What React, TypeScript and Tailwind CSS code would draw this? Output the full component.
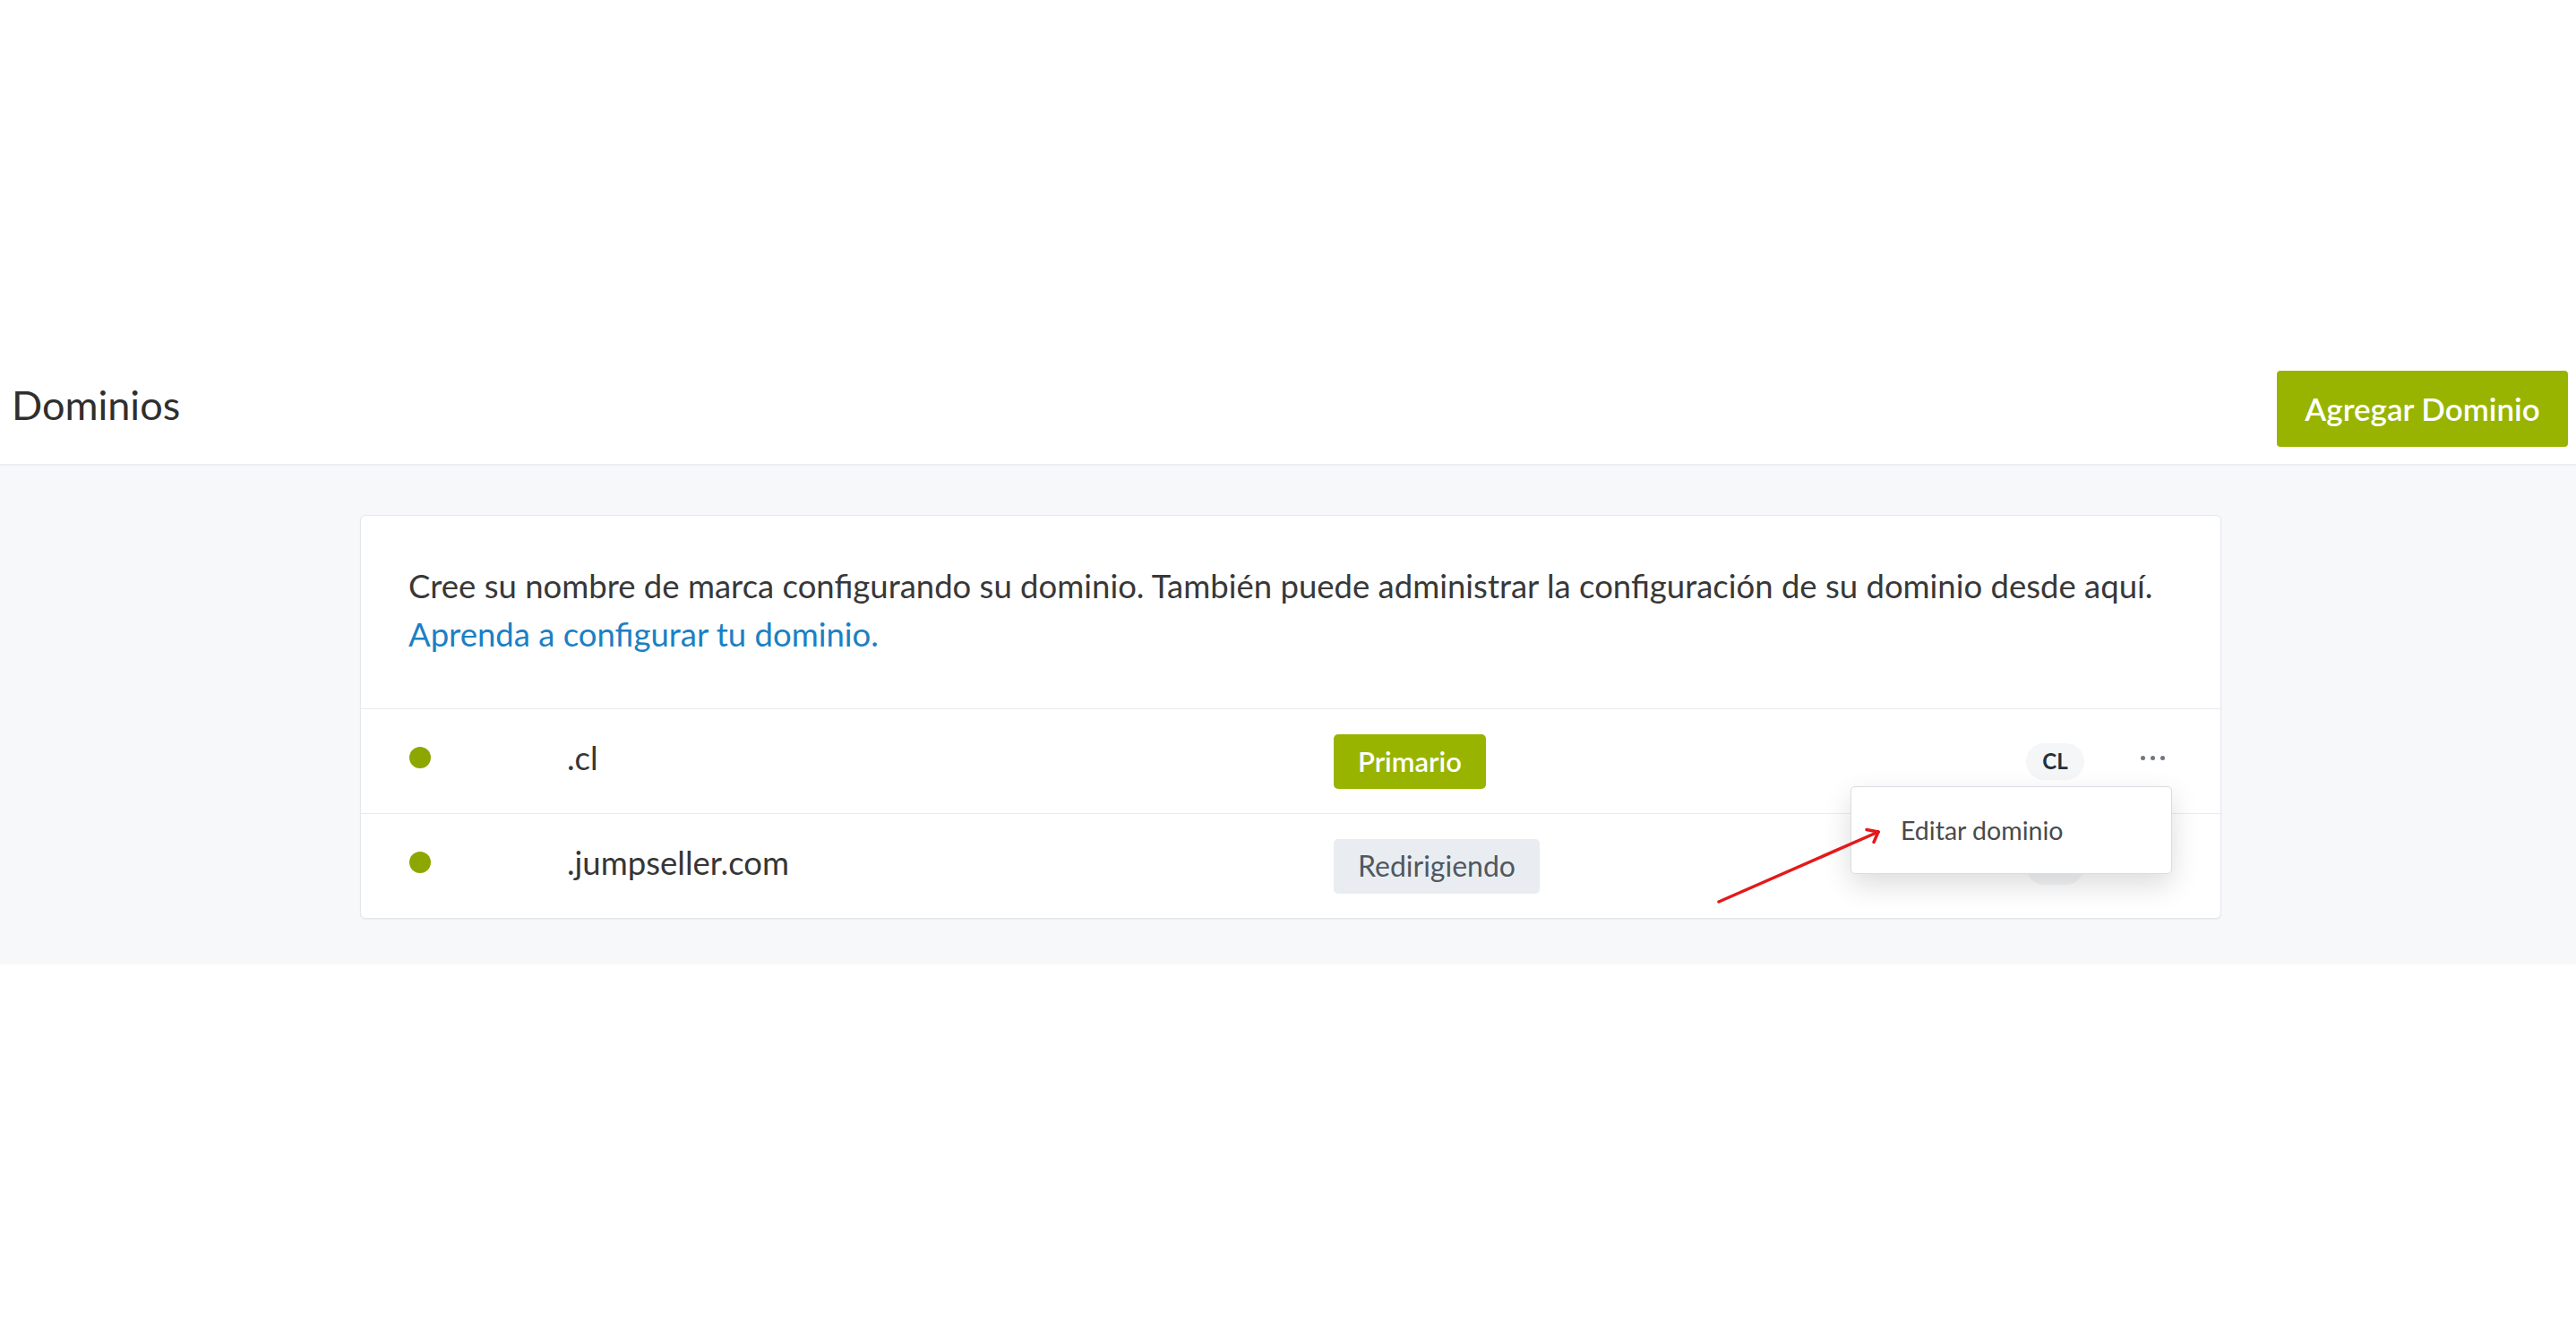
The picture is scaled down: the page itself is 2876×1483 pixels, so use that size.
const domains = [
  { name: ".cl", status: "Primario", primary: true },
  { name: ".jumpseller.com", status: "Redirigiendo", primary: false },
]

export default function App() {
  return (
    <div className="min-h-screen bg-white font-['Lato',sans-serif] text-[#333]">
      {/* top bar area (empty) */}
      <div className="h-[414px]" />

      {/* Page header */}
      <header className="flex items-center justify-between border-b-2 border-[#eceef1] pb-[19px] pl-[13px] pr-[9px]">
        <h1 className="mb-[8px] text-[45px] font-normal leading-none text-[#2f2f2f]">Dominios</h1>
        <button className="h-[85px] w-[325px] rounded-[4px] bg-[#98b400] text-[35px] font-semibold text-white">
          Agregar Dominio
        </button>
      </header>

      <main className="bg-[#f7f8fa] pb-[51px] pt-[55px]">
        <div className="relative ml-[402px] w-[2078px] rounded-[6px] border border-[#e4e7eb] bg-white shadow-[0_1px_2px_rgba(0,0,0,0.06)]">
          {/* Intro */}
          <div className="border-b border-[#e8eaed] px-[53px] pb-[56px] pt-[51px] text-[36.5px] leading-[54px] text-[#383838]">
            <p className="whitespace-nowrap">
              Cree su nombre de marca configurando su dominio. También puede administrar la configuración de su dominio desde aquí.
            </p>
            <a className="block text-[#1b80c4]">Aprenda a configurar tu dominio.</a>
          </div>

          {/* Domain rows */}
          {domains.map((d, i) => (
            <div
              key={d.name}
              className={`flex items-center pl-[54px] pr-[62px] ${i === 0 ? "h-[117px] border-b border-[#e8ebef]" : "h-[116px]"}`}
            >
              <div className="mb-[8px] flex w-[176px]">
                <span className="h-6 w-6 rounded-full bg-[#8ea600]" />
              </div>
              <div className="mb-[8px] w-[856px] text-[36.5px] leading-none text-[#363636]">{d.name}</div>
              {d.primary ? (
                <span className="inline-flex h-[61px] items-center rounded-[5px] bg-[#98b400] px-[27px] text-[31px] font-semibold text-white">
                  {d.status}
                </span>
              ) : (
                <span className="inline-flex h-[61px] items-center rounded-[5px] bg-[#e9edf1] px-[27px] text-[32px] text-[#4f5862]">
                  {d.status}
                </span>
              )}
              <div className="ml-auto flex items-center">
                <span className="flex h-[41px] w-[65px] items-center justify-center rounded-full bg-[#f4f6f8] text-[24px] font-bold text-[#26303a]">
                  CL
                </span>
                <button className="mb-[8px] ml-[63px] flex items-center gap-[6px]">
                  <span className="h-[5px] w-[5px] rounded-full bg-[#6f7680]" />
                  <span className="h-[5px] w-[5px] rounded-full bg-[#6f7680]" />
                  <span className="h-[5px] w-[5px] rounded-full bg-[#6f7680]" />
                </button>
              </div>
            </div>
          ))}

          {/* Dropdown menu */}
          <div className="absolute left-[1663px] top-[302px] flex h-[98px] w-[359px] items-center rounded-[5px] border border-[#d9dce0] bg-white pl-[55px] shadow-[0_12px_32px_rgba(0,0,0,0.14)]">
            <span className="text-[28.5px] text-[#4a4a4a]">Editar dominio</span>
          </div>

          {/* annotation arrow */}
          <svg className="absolute left-[1499px] top-[339px]" width="210" height="110" viewBox="0 0 210 110">
            <g stroke="#e3191b" strokeWidth="3.5" strokeLinecap="round" fill="none">
              <line x1="17" y1="92" x2="195" y2="14" />
              <line x1="195" y1="14" x2="182" y2="11.5" />
              <line x1="195" y1="14" x2="190" y2="25.5" />
            </g>
          </svg>
        </div>
      </main>
    </div>
  )
}
